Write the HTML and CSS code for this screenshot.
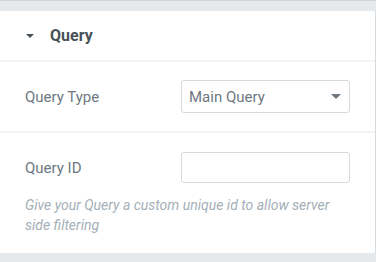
FILE: index.html
```html
<!DOCTYPE html>
<html lang="en">
<head>
  <meta charset="UTF-8">
  <title>Query settings</title>
  <link rel="stylesheet" href="styles.css">
</head>
<body>
  <div class="panel">
    <!-- Section header -->
    <div class="section-head">
      <span class="caret"></span>
      <span class="section-title">Query</span>
    </div>

    <!-- Query Type -->
    <div class="control">
      <label class="control-label">Query Type</label>
      <div class="select">
        <span>Main Query</span>
        <span class="caret small"></span>
      </div>
    </div>

    <!-- Query ID -->
    <div class="control control-stacked">
      <div class="control-row">
        <label class="control-label">Query ID</label>
        <input type="text" class="text-input">
      </div>
      <p class="description">Give your Query a custom unique id to allow server side filtering</p>
    </div>
  </div>
</body>
</html>
```

FILE: styles.css
```css
/* Base */
body {
  margin: 0;
  background: #e6e9ec;
  border-top: 1px solid #cfd4d9;
  font-family: Roboto, 'Liberation Sans', sans-serif;
  font-size: 15px;
}

.panel {
  margin-top: 10px;
  width: 375px;
  background: #fff;
  border-right: 1px solid #d5dadf;
}

/* Header */
.section-head {
  height: 49px;
  display: flex;
  align-items: center;
  padding: 0 25px 0 26px;
  border-bottom: 2px solid #f1f3f5;
}

.caret {
  width: 0;
  height: 0;
  border-left: 4px solid transparent;
  border-right: 4px solid transparent;
  border-top: 4px solid #495157;
  margin-right: 16px;
}

.caret.small {
  margin-right: 1px;
  border-left-width: 5px;
  border-right-width: 5px;
  border-top: 5px solid #6d7882;
}

.section-title {
  font-weight: 700;
  font-size: 16px;
  color: #495157;
}

/* Controls */
.control {
  height: 69px;
  display: flex;
  align-items: center;
  justify-content: space-between;
  padding: 0 25px;
  border-bottom: 2px solid #f1f3f5;
}

.control-label {
  color: #6d7882;
  font-size: 15px;
}

.select {
  width: 169px;
  height: 33px;
  box-sizing: border-box;
  border: 1px solid #d5dadf;
  border-radius: 3px;
  display: flex;
  align-items: center;
  justify-content: space-between;
  padding: 0 7px;
  color: #6d7882;
}

.control-stacked {
  height: auto;
  display: block;
  padding: 19px 25px 18px;
  border-bottom: none;
}

.control-row {
  display: flex;
  align-items: center;
  justify-content: space-between;
}

.text-input {
  width: 169px;
  height: 31px;
  box-sizing: border-box;
  border: 1px solid #d5dadf;
  border-radius: 3px;
  margin: 0;
  outline: none;
}

.description {
  margin: 12px 0 0;
  font-size: 14px;
  line-height: 20px;
  font-style: italic;
  color: #a4afb7;
}
```
